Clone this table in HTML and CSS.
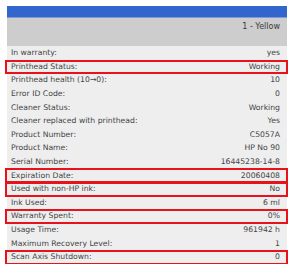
FILE: index.html
```html
<!DOCTYPE html>
<html>
<head>
<meta charset="utf-8">
<link rel="stylesheet" href="styles.css">
</head>
<body>
<div class="panel">
  <div class="titlebar"></div>
  <div class="head"><span>1 - Yellow</span></div>
  <div class="rows">
    <div class="row"><span>In warranty:</span><span>yes</span></div>
    <div class="row mark"><span>Printhead Status:</span><span>Working</span></div>
    <div class="row"><span>Printhead health (10&#8594;0):</span><span>10</span></div>
    <div class="row"><span>Error ID Code:</span><span>0</span></div>
    <div class="row"><span>Cleaner Status:</span><span>Working</span></div>
    <div class="row"><span>Cleaner replaced with printhead:</span><span>Yes</span></div>
    <div class="row"><span>Product Number:</span><span>C5057A</span></div>
    <div class="row"><span>Product Name:</span><span>HP No 90</span></div>
    <div class="row"><span>Serial Number:</span><span>16445238-14-8</span></div>
    <div class="row mark"><span>Expiration Date:</span><span>20060408</span></div>
    <div class="row mark"><span>Used with non-HP ink:</span><span>No</span></div>
    <div class="row"><span>Ink Used:</span><span>6 ml</span></div>
    <div class="row mark"><span>Warranty Spent:</span><span>0%</span></div>
    <div class="row"><span>Usage Time:</span><span>961942 h</span></div>
    <div class="row"><span>Maximum Recovery Level:</span><span>1</span></div>
    <div class="row mark"><span>Scan Axis Shutdown:</span><span>0</span></div>
  </div>
</div>
</body>
</html>
```
FILE: styles.css
```css
html, body {
  margin: 0;
  padding: 0;
  background: #ffffff;
}
body {
  padding: 6px 0 0 7px;
  font-family: "DejaVu Sans", Verdana, sans-serif;
  font-size: 7.7px;
  color: #444444;
}
.panel {
  width: 280px;
}
.titlebar {
  height: 11px;
  background: #3366cc;
  border-bottom: 1px solid #7f9ad6;
}
.head {
  height: 28px;
  background: #cdcdcd;
  display: flex;
  justify-content: flex-end;
  align-items: flex-start;
  padding: 4px 7px 0 4px;
  box-sizing: border-box;
  color: #3a3a3a;
  font-size: 8px;
}
.rows {
  background: #eeeeee;
}
.row {
  position: relative;
  height: 13.6px;
  display: flex;
  justify-content: space-between;
  align-items: center;
  padding: 0 7px 0 4px;
  box-sizing: border-box;
  white-space: nowrap;
}
.row.mark::after {
  content: "";
  position: absolute;
  top: 0;
  bottom: -1px;
  left: -2px;
  right: -1px;
  border: 2px solid #e8121a;
}
```
